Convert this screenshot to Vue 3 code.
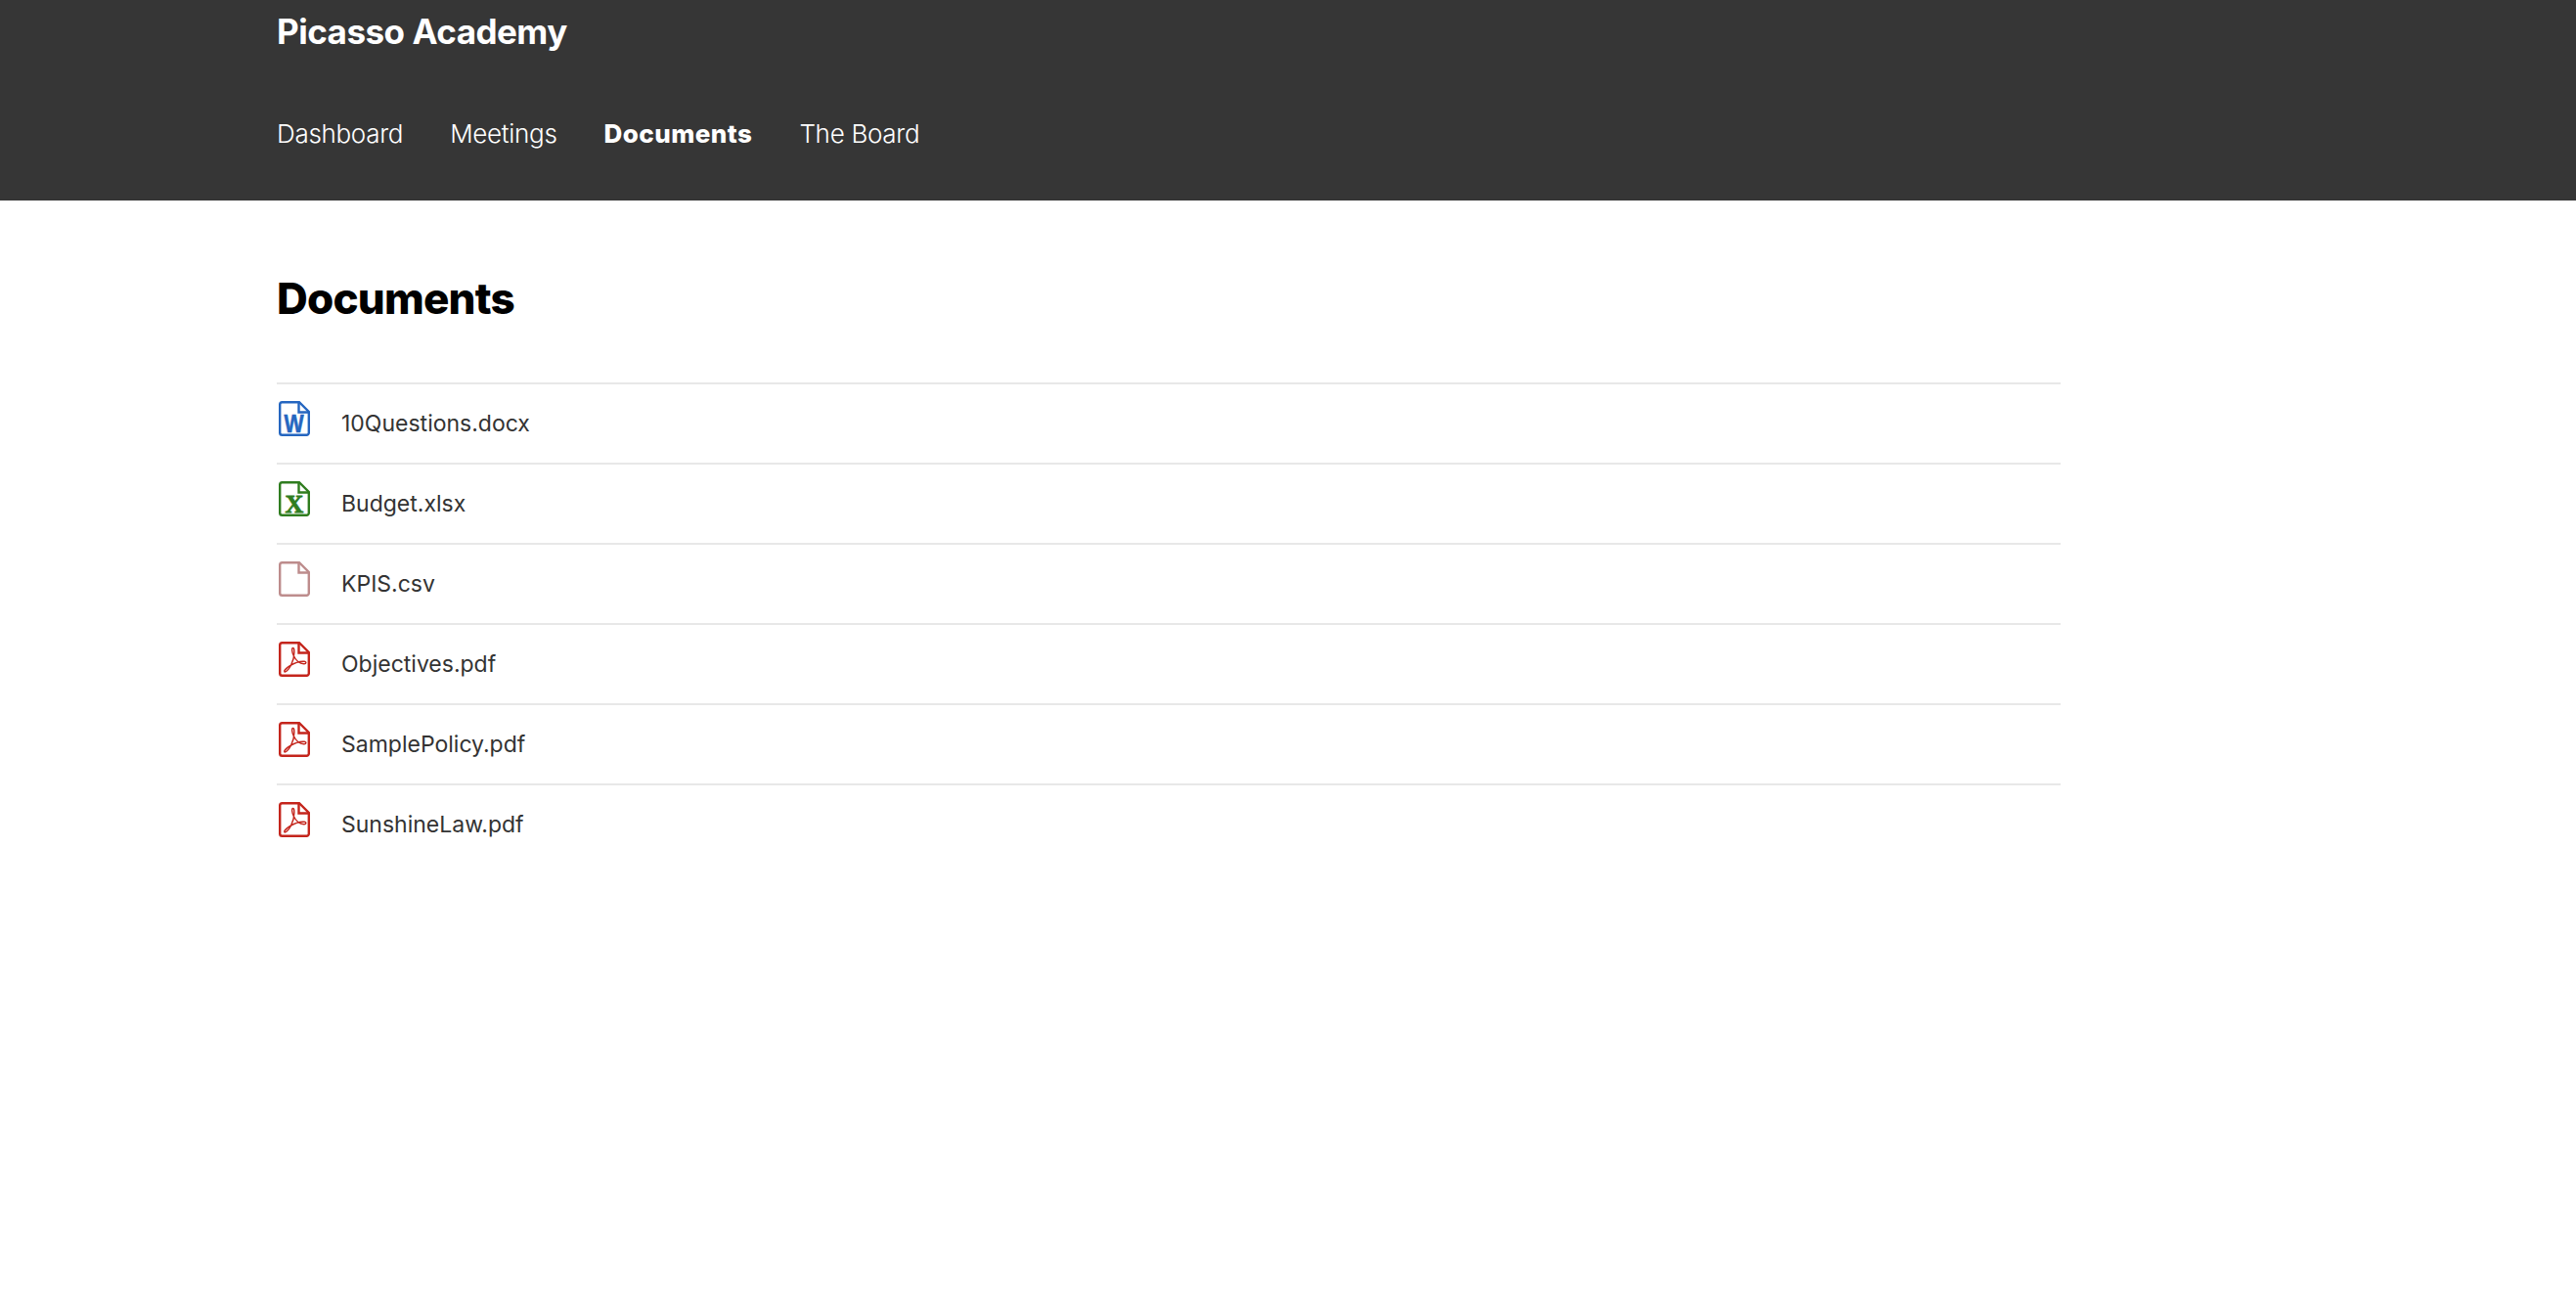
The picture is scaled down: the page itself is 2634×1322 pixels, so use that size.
<script setup>
const nav = [
  { label: 'Dashboard' },
  { label: 'Meetings' },
  { label: 'Documents', active: true },
  { label: 'The Board' },
]
const docs = [
  { name: '10Questions.docx', type: 'word' },
  { name: 'Budget.xlsx', type: 'excel' },
  { name: 'KPIS.csv', type: 'blank' },
  { name: 'Objectives.pdf', type: 'pdf' },
  { name: 'SamplePolicy.pdf', type: 'pdf' },
  { name: 'SunshineLaw.pdf', type: 'pdf' },
]
</script>

<template>
  <div class="page">
    <header class="header">
      <div class="brand">Picasso Academy</div>
      <nav class="nav">
        <a v-for="item in nav" :key="item.label" class="nav-link" :class="{ active: item.active }">{{ item.label }}</a>
      </nav>
    </header>
    <main class="main">
      <h1 class="title">Documents</h1>
      <ul class="list">
        <li v-for="doc in docs" :key="doc.name" class="row">
          <svg class="icon" :class="doc.type" viewBox="0 0 32 36" width="32" height="36" aria-hidden="true">
            <path class="sheet" d="M3.500 1.200H21L30.800 11V32.500a2.300 2.300 0 0 1-2.300 2.300H3.500a2.300 2.300 0 0 1-2.300-2.300V3.500a2.300 2.300 0 0 1 2.300-2.300Z" />
            <path class="fold" d="M20.500 1.500V11.500H30.500" />
            <text v-if="doc.type === 'word'" class="word-mark" transform="translate(15.500 32) scale(.82 1)" text-anchor="middle">W</text>
            <text v-if="doc.type === 'excel'" class="excel-mark" x="16" y="32" text-anchor="middle">X</text>
            <path v-if="doc.type === 'pdf'" class="pdf-mark" d="M14.600 6.500c-1.600 0-1.200 4.200.8 8.300 2.200 4.400 6 7.700 10.200 8 2.800.2 3.100-2.300.4-2.500-5.200-.4-10.500 1.900-14.500 4.400-3 1.900-6.200 4.900-5.700 6 .6 1.200 4.200-1.600 6.700-6.500 2-4 3.400-8.700 3.400-13.200 0-3-.2-4.500-1.300-4.500Z" />
          </svg>
          <span class="name">{{ doc.name }}</span>
        </li>
      </ul>
    </main>
  </div>
</template>

<style scoped>
.page {
  min-height: 1322px;
  background: #fff;
  font-family: Inter, "Liberation Sans", sans-serif;
}
.header {
  height: 205px;
  box-sizing: border-box;
  background: #363636;
  padding: 0 283px;
  color: #fff;
}
.brand {
  font-size: 35px;
  font-weight: 700;
  line-height: 64px;
  letter-spacing: -0.5px;
}
.nav {
  display: flex;
  gap: 48px;
  padding-top: 41px;
}
.nav-link {
  font-size: 26px;
  font-weight: 300;
  line-height: 64px;
  letter-spacing: -0.3px;
}
.nav-link.active {
  font-weight: 800;
  letter-spacing: 0.45px;
}
.main {
  width: 1824px;
  margin-left: 283px;
}
.title {
  margin: 0;
  padding-top: 68px;
  font-size: 44px;
  font-weight: 760;
  line-height: 64px;
  letter-spacing: -0.8px;
  color: #000;
}
.list {
  list-style: none;
  margin: 54px 0 0;
  padding: 0;
}
.row {
  display: flex;
  align-items: flex-start;
  height: 82px;
  box-sizing: border-box;
  border-top: 2px solid #e8e8e8;
}
.icon {
  flex: none;
  margin: 17px 0 0 2px;
  overflow: visible;
}
.name {
  margin-left: 32px;
  font-size: 23px;
  line-height: 80px;
  color: #333;
}
.sheet,
.fold {
  fill: none;
  stroke-width: 2.4;
}
.word .sheet, .word .fold { stroke: #2566c0; }
.excel .sheet, .excel .fold { stroke: #2f7d1f; }
.blank .sheet, .blank .fold { stroke: #bd8c8c; }
.pdf .sheet, .pdf .fold { stroke: #c4251c; }
.word-mark {
  font-family: "Liberation Sans", sans-serif;
  font-weight: 700;
  font-size: 26px;
  fill: #2566c0;
  stroke: #2566c0;
  stroke-width: 0.6;
}
.excel-mark {
  font-family: "Liberation Serif", serif;
  font-weight: 700;
  font-size: 26px;
  fill: #2f7d1f;
  stroke: #2f7d1f;
  stroke-width: 0.8;
}
.pdf-mark {
  fill: none;
  stroke: #c4251c;
  stroke-width: 1.4;
}
</style>
